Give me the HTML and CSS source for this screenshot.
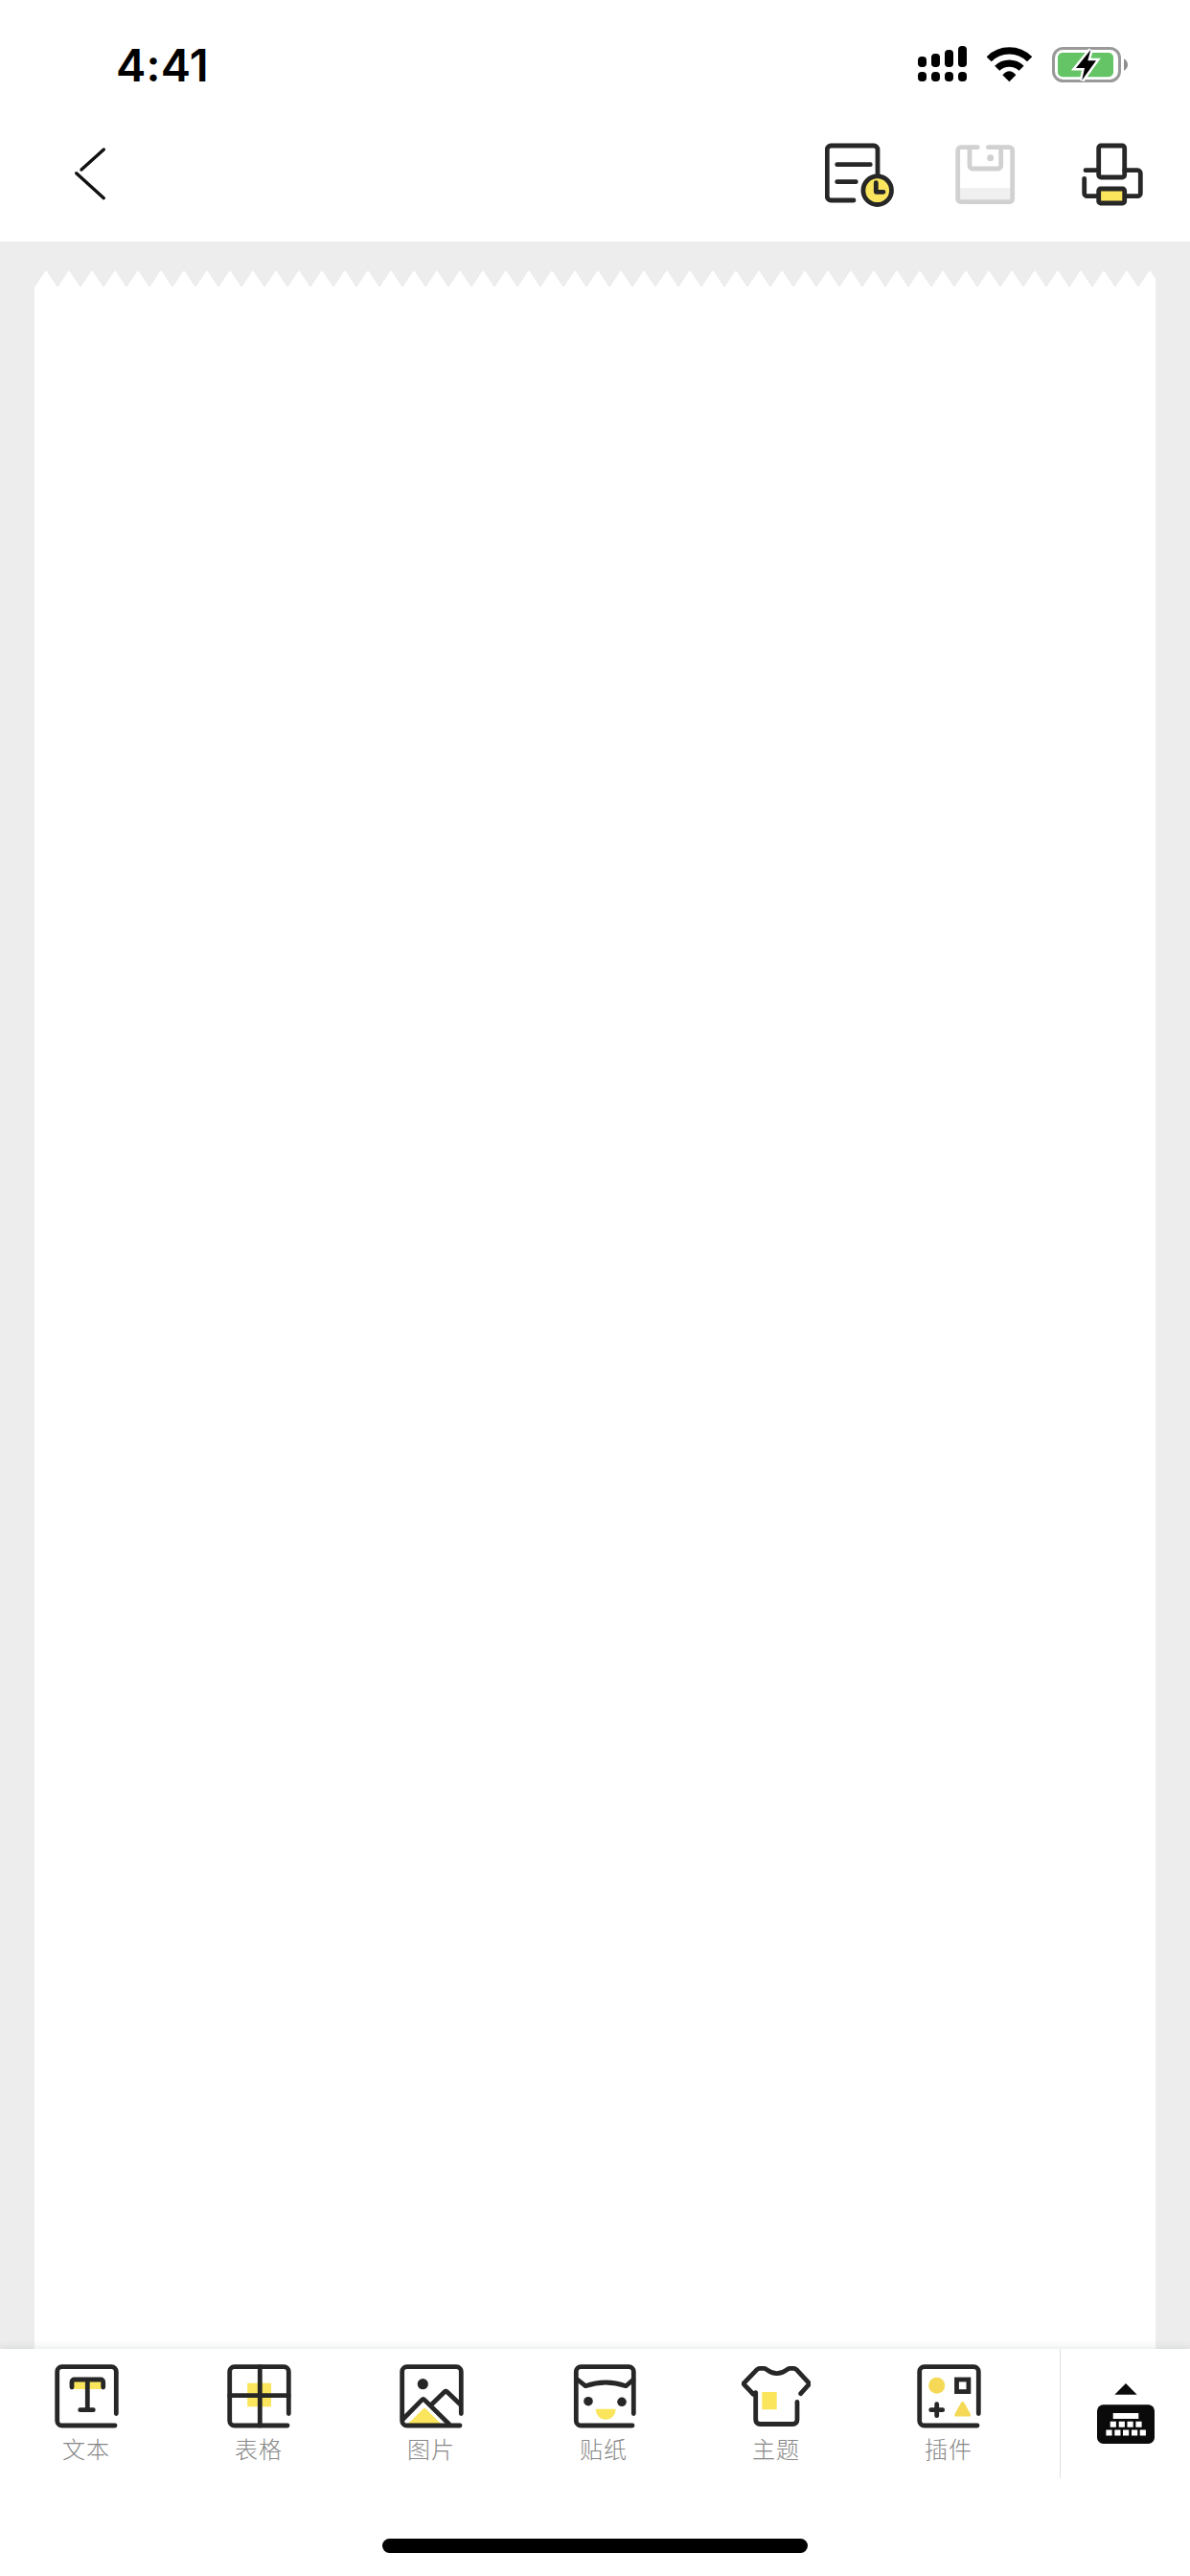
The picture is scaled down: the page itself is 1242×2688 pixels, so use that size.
FILE: index.html
```
<!DOCTYPE html>
<html lang="zh-Hans">
<head>
    <meta charset="UTF-8">
    <meta name="viewport" content="width=device-width, initial-scale=1.0">
    <title>编辑</title>
    <link rel="stylesheet" href="styles.css">
</head>
<body>

    <div class="status-bar">
        <div class="time">4:41</div>
        <div class="status-icons">
            <svg class="signal" width="51" height="38" viewBox="0 0 51 38">
                <rect x="0" y="11" width="9" height="11" rx="4"/>
                <rect x="14" y="8" width="9" height="14" rx="4"/>
                <rect x="28" y="4" width="9" height="18" rx="4"/>
                <rect x="42" y="0" width="9" height="22" rx="4"/>
                <rect x="0" y="27" width="9" height="10" rx="4"/>
                <rect x="14" y="27" width="9" height="10" rx="4"/>
                <rect x="28" y="27" width="9" height="10" rx="4"/>
                <rect x="42" y="27" width="9" height="10" rx="4"/>
            </svg>
            <svg class="wifi" width="47" height="38" viewBox="0 0 47 38">
                <path d="M2.2 13.8A29.7 29.7 0 0 1 44.6 13.8M10.7 23.3A18 18 0 0 1 36.1 23.3" fill="none" stroke="#000" stroke-width="7.2"/>
                <path d="M16.4 30.3Q23.4 22.2 30.4 30.3L23.4 37.2Z"/>
            </svg>
            <svg class="battery" width="80" height="39" viewBox="0 0 80 39">
                <rect x="1.5" y="2.5" width="69" height="34" rx="10" fill="none" stroke="#999" stroke-width="3"/>
                <rect x="6" y="7" width="58" height="25.2" rx="5" fill="#65c466"/>
                <path d="M75 13.2Q79 15.5 79 19.5T75 25.7Z" fill="#8e8e8e"/>
                <path class="bolt" d="M40.3 4L25 23H34L31.2 35.8L46 15.3H37.3Z"/>
            </svg>
        </div>
    </div>

    <div class="nav-bar">
        <svg class="back" width="48" height="60" viewBox="0 0 48 60">
            <path d="M36.3 6L13 27M7.7 30.7L36.3 56.7"/>
        </svg>
        <div class="nav-actions">
            <svg class="icon" viewBox="0 0 72 72">
                <path d="M55 38V9a4 4 0 0 0-4-4H6.3a4 4 0 0 0-4 4V58a4 4 0 0 0 4 4H30M12.7 24.7H47.3M12.7 42.7H32.3"/>
                <circle class="yellow-line" cx="54.7" cy="51.7" r="14.8"/>
                <path d="M53.3 43.7V53.3H61"/>
            </svg>
            <svg class="icon icon-disabled" viewBox="0 0 72 72">
                <rect class="shade" x="8" y="49" width="54" height="13"/>
                <path d="M27.3 6.7H10a3.3 3.3 0 0 0-3.3 3.3V60.4a3.3 3.3 0 0 0 3.3 3.3H60.4a3.3 3.3 0 0 0 3.3-3.3V10a3.3 3.3 0 0 0-3.3-3.3H38.3M19 7V26a3 3 0 0 0 3 3H48.7a3 3 0 0 0 3-3V7"/>
                <circle class="dot" cx="40.7" cy="17.7" r="3.5"/>
            </svg>
            <svg class="icon" viewBox="0 0 72 72">
                <rect x="21.7" y="5" width="27" height="33" rx="2.5"/>
                <path d="M21.7 30.7H8M6.7 39.3V54.7a3 3 0 0 0 3 3H21.7M48.7 30.7H62.3a3 3 0 0 1 3 3V54.7a3 3 0 0 1-3 3H48.7"/>
                <rect class="yellow-line" x="21.7" y="50" width="27" height="15" rx="2"/>
            </svg>
        </div>
    </div>

    <div class="canvas">
        <div class="paper-edge"></div>
        <div class="paper"></div>
    </div>

    <div class="toolbar">
        <div class="tools">
            <div class="tool">
                <svg class="icon" viewBox="0 0 72 72">
                    <rect class="yellow" x="22.5" y="20" width="29.5" height="9"/>
                    <path d="M67.3 54.5V10.7a5 5 0 0 0-5-5H10.7a5 5 0 0 0-5 5V62a5 5 0 0 0 5 5H66"/>
                    <path d="M21 27V21.5a2.5 2.5 0 0 1 2.5-2.5H51.2a2.5 2.5 0 0 1 2.5 2.5V27M37.3 19V50.7M29.7 50.7H43.3"/>
                </svg>
                <span>文本</span>
            </div>
            <div class="tool">
                <svg class="icon" viewBox="0 0 72 72">
                    <rect class="yellow" x="24.2" y="22.7" width="24.8" height="24.6"/>
                    <path d="M67.3 54.5V10.7a5 5 0 0 0-5-5H10.7a5 5 0 0 0-5 5V62a5 5 0 0 0 5 5H66"/>
                    <path d="M37.3 5.7V67M5.7 35.7H67.3"/>
                </svg>
                <span>表格</span>
            </div>
            <div class="tool">
                <svg class="icon" viewBox="0 0 72 72">
                    <path class="yellow" d="M29 48.3L46 65H12Z"/>
                    <path d="M67.3 54.5V10.7a5 5 0 0 0-5-5H10.7a5 5 0 0 0-5 5V62a5 5 0 0 0 5 5H66"/>
                    <path d="M6.7 60.3L26.2 40.4Q27.7 38.9 29.2 40.4L54.7 65.5M36.2 45.3L49.8 32Q51.3 30.7 52.8 32L66.7 45.3"/>
                    <circle class="dot" cx="27.3" cy="23.7" r="5.6"/>
                </svg>
                <span>图片</span>
            </div>
            <div class="tool">
                <svg class="icon" viewBox="0 0 72 72">
                    <path class="yellow" d="M27.7 49.7H48.7A10.5 11 0 0 1 27.7 49.7Z"/>
                    <path d="M67.3 54.5V10.7a5 5 0 0 0-5-5H12.3a5 5 0 0 0-5 5V62a5 5 0 0 0 5 5H66"/>
                    <path d="M8.7 19L17 25.7Q38.2 18.3 59.3 25.7L67 19"/>
                    <circle class="dot" cx="20" cy="41.7" r="4.8"/>
                    <circle class="dot" cx="55" cy="42.3" r="4.8"/>
                </svg>
                <span>贴纸</span>
            </div>
            <div class="tool">
                <svg class="icon" viewBox="0 0 72 72">
                    <rect class="yellow" x="21.3" y="32" width="15.4" height="18.3"/>
                    <path d="M12 34L1.8 23.3L16 8.6Q17.3 7.3 19 7.3H23.3Q25 7.3 26.2 8.6Q36.7 16.6 47.5 8.6Q48.7 7.3 50.4 7.3H54.3Q56 7.3 57.3 8.6L70.9 23.3L61.7 33.7"/>
                    <path d="M12 34L14.7 32.7V61a4.5 4.5 0 0 0 4.5 4.5H53.5A4.5 4.5 0 0 0 58 61V42.3"/>
                </svg>
                <span>主题</span>
            </div>
            <div class="tool">
                <svg class="icon" viewBox="0 0 72 72">
                    <path d="M67.3 54.5V10.7a5 5 0 0 0-5-5H10.7a5 5 0 0 0-5 5V62a5 5 0 0 0 5 5H66"/>
                    <circle class="gold" cx="23.7" cy="25.3" r="8.5"/>
                    <rect class="square" x="44.5" y="19" width="12.4" height="12.6"/>
                    <path d="M23.7 44.7V56.7M17.7 50.7H29.7"/>
                    <path class="gold" d="M49 43.2Q50.7 40.8 52.4 43.2L58.8 54.8Q59.8 57.6 57.5 57.6H43.9Q41.6 57.6 42.6 54.8Z"/>
                </svg>
                <span>插件</span>
            </div>
        </div>
        <div class="keyboard">
            <svg width="60" height="63" viewBox="0 0 60 63">
                <path d="M30 0L41.7 11.7H18.3Z"/>
                <rect x="0" y="22.3" width="60" height="40.7" rx="6.5"/>
                <path fill="#fff" d="M16.7 31h26.6v6H16.7ZM13.7 39.7h6.2v6h-6.2ZM22.7 39.7h6.2v6h-6.2ZM31.5 39.7h6.2v6h-6.2ZM40.4 39.7h6.2v6h-6.2ZM9.4 48.4h6.2v6H9.4ZM18.3 48.4h6.2v6h-6.2ZM27 48.4h6.2v6H27ZM36 48.4h6.2v6H36ZM44.7 48.4h6.2v6h-6.2Z"/>
            </svg>
        </div>
    </div>

    <div class="home-area">
        <div class="home-indicator"></div>
    </div>

</body>
</html>
```
FILE: styles.css
```
* {
    box-sizing: border-box;
}
body {
    font-family: Inter, "Noto Sans CJK SC", sans-serif;
    background: #fff;
    margin: 0;
    height: 2688px;
    display: flex;
    flex-direction: column;
    overflow: hidden;
}
svg {
    display: block;
    flex: none;
}

/* 状态栏 */
.status-bar {
    height: 132px;
    padding: 0 64px 0 121px;
    display: flex;
    justify-content: space-between;
    align-items: flex-start;
}
.time {
    font-size: 47px;
    font-weight: 600;
    line-height: 56px;
    margin-top: 40px;
    letter-spacing: 0.2px;
    color: #000;
}
.status-icons {
    display: flex;
    margin-top: 48px;
}
.wifi {
    margin: 0 21px;
}
.bolt {
    fill: #000;
    stroke: #fff;
    stroke-width: 5;
    paint-order: stroke;
}

/* 导航栏 */
.nav-bar {
    height: 120px;
    padding: 15px 45px 0 72px;
    display: flex;
    justify-content: space-between;
    align-items: flex-start;
}
.back {
    margin-top: 3px;
    fill: none;
    stroke: #111;
    stroke-width: 3.4;
    stroke-linecap: round;
}
.nav-actions {
    display: flex;
    gap: 60px;
}

/* 线条图标 */
.icon {
    width: 72px;
    height: 72px;
    fill: none;
    stroke: #272727;
    stroke-width: 4.8;
    stroke-linecap: round;
    stroke-linejoin: round;
}
.icon-disabled {
    stroke: #d1d1d1;
}
.icon .dot {
    fill: #272727;
    stroke: none;
}
.icon-disabled .dot {
    fill: #d1d1d1;
}
.icon .shade {
    fill: #f0f0f0;
    stroke: none;
}
.icon .yellow {
    fill: #fae55c;
    stroke: none;
}
.icon .yellow-line {
    fill: #fae55c;
}
.icon .gold {
    fill: #f5d956;
    stroke: none;
}
.icon .square {
    stroke-linejoin: miter;
}

/* 画布 */
.canvas {
    flex: 1;
    background: #ededed;
    padding: 30px 36px 0;
    display: flex;
    flex-direction: column;
}
.paper-edge {
    height: 18px;
    background: conic-gradient(from 146.31deg at 50% 0, #fff 67.38deg, transparent 0) 0 0 / 24px 18px repeat-x;
}
.paper {
    flex: 1;
    background: #fff;
}

/* 底部工具栏 */
.toolbar {
    position: relative;
    height: 135px;
    background: #fff;
    box-shadow: 0 0 9px rgba(30, 50, 45, 0.15);
    clip-path: inset(-12px 0 0 0);
    display: flex;
}
.tools {
    width: 1107px;
    border-right: 1px solid #dfdfdf;
    display: flex;
}
.tool {
    width: 180px;
    flex: none;
    padding-top: 13px;
    display: flex;
    flex-direction: column;
    align-items: center;
}
.tool span {
    font-family: "Noto Sans CJK SC", sans-serif;
    font-size: 24px;
    font-weight: 300;
    line-height: 36px;
    margin-top: 1px;
    letter-spacing: 1px;
    color: #878787;
}
.keyboard {
    flex: 1;
    display: flex;
    justify-content: center;
    align-items: center;
}
.keyboard svg {
    fill: #0a0a0a;
}

.home-area {
    height: 102px;
    padding-top: 63px;
}
.home-indicator {
    width: 444px;
    height: 15px;
    margin: 0 auto;
    border-radius: 8px;
    background: #000;
}
```
